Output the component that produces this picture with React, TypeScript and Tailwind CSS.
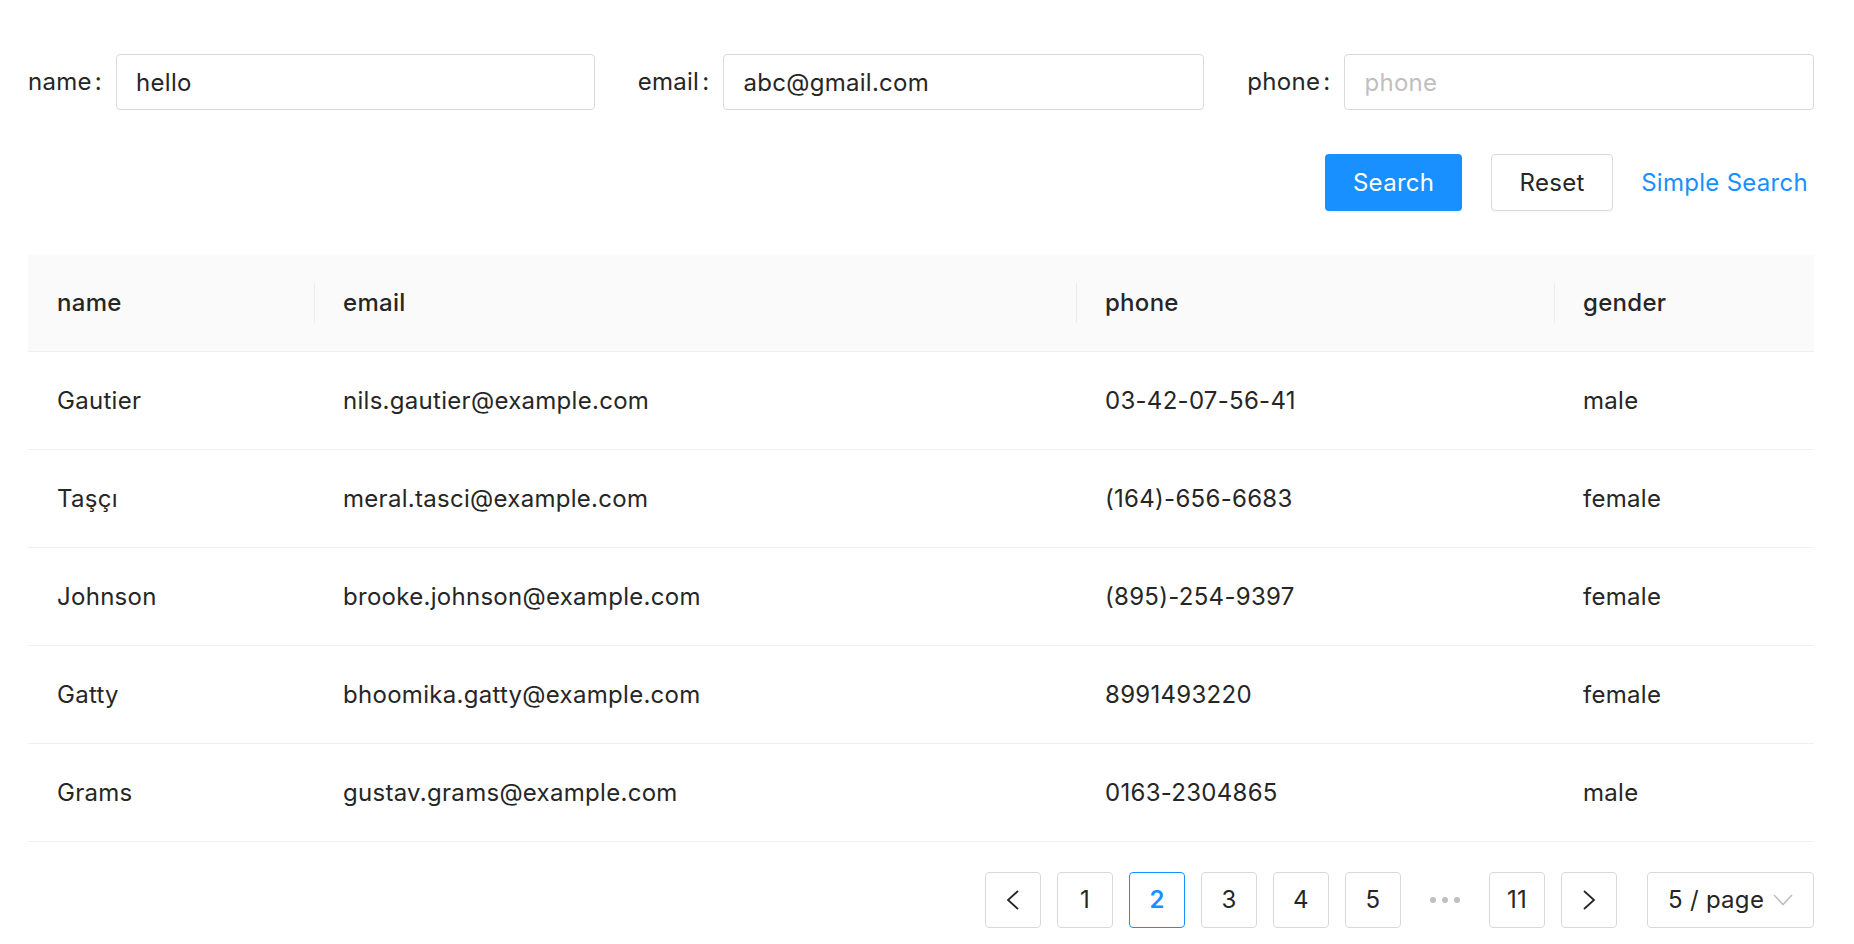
import React from "react";

const rows = [
  { name: "Gautier", email: "nils.gautier@example.com", phone: "03-42-07-56-41", gender: "male" },
  { name: "Taşçı", email: "meral.tasci@example.com", phone: "(164)-656-6683", gender: "female" },
  { name: "Johnson", email: "brooke.johnson@example.com", phone: "(895)-254-9397", gender: "female" },
  { name: "Gatty", email: "bhoomika.gatty@example.com", phone: "8991493220", gender: "female" },
  { name: "Grams", email: "gustav.grams@example.com", phone: "0163-2304865", gender: "male" },
];

function Field({ label, value, placeholder }: { label: string; value?: string; placeholder?: string }) {
  return (
    <div className="flex items-center">
      <label className="flex shrink-0 items-center whitespace-nowrap">
        <span>{label}</span>
        <span className="ml-[3px] mr-[14px]">:</span>
      </label>
      <input
        readOnly
        value={value ?? ""}
        placeholder={placeholder}
        className="h-[56px] min-w-0 flex-1 rounded-[4px] border border-[#d9d9d9] bg-white pl-[19px] pr-[19px] text-[24px] tracking-[0.012em] text-[#262626] outline-none placeholder:text-[#bfbfbf]"
      />
    </div>
  );
}

function PageBtn({ children, active }: { children: React.ReactNode; active?: boolean }) {
  return (
    <div
      className={
        active
          ? "flex h-[56px] w-[56px] items-center justify-center rounded-[4px] border border-[#1890ff] bg-white font-semibold text-[#1890ff]"
          : "flex h-[56px] w-[56px] items-center justify-center rounded-[4px] border border-[#d9d9d9] bg-white text-[#262626]"
      }
    >
      {children}
    </div>
  );
}

export default function App() {
  return (
    <div className="min-h-screen bg-white pl-[28px] pr-[40px] pt-[54px] font-['Inter','Noto_Sans',sans-serif] text-[24px] leading-[1.5] tracking-[0.012em] text-[#262626]">
      <div className="grid grid-cols-3 gap-x-[43px]">
        <Field label="name" value="hello" />
        <Field label="email" value="abc@gmail.com" />
        <Field label="phone" placeholder="phone" />
      </div>

      <div className="mt-[44px] flex items-center justify-end">
        <button className="h-[57px] w-[137px] rounded-[4px] bg-[#1890ff] tracking-[0.012em] text-white shadow-[0_2px_0_rgba(0,0,0,0.045)]">
          Search
        </button>
        <button className="ml-[29px] h-[57px] w-[122px] rounded-[4px] border border-[#d9d9d9] bg-white tracking-[0.012em] text-[#262626] shadow-[0_2px_0_rgba(0,0,0,0.015)]">
          Reset
        </button>
        <button className="ml-[28px] h-[57px] pr-[6px] tracking-[0.012em] text-[#1890ff]">Simple Search</button>
      </div>

      <div className="mt-[44px]">
        <div className="grid h-[97px] grid-cols-[286px_762px_478px_1fr] items-center border-b border-[#f0f0f0] bg-[#fafafa] font-medium">
          <div className="relative pl-[29px]">name</div>
          <div className="relative flex items-center pl-[29px]">
            <span className="absolute left-0 top-1/2 h-[40px] w-px -translate-y-1/2 bg-[#ececec]" />
            email
          </div>
          <div className="relative flex items-center pl-[29px]">
            <span className="absolute left-0 top-1/2 h-[40px] w-px -translate-y-1/2 bg-[#ececec]" />
            phone
          </div>
          <div className="relative flex items-center pl-[29px]">
            <span className="absolute left-0 top-1/2 h-[40px] w-px -translate-y-1/2 bg-[#ececec]" />
            gender
          </div>
        </div>
        {rows.map((r) => (
          <div
            key={r.email}
            className="grid h-[98px] grid-cols-[286px_762px_478px_1fr] items-center border-b border-[#f0f0f0]"
          >
            <div className="pl-[29px]">{r.name}</div>
            <div className="pl-[29px]">{r.email}</div>
            <div className="pl-[29px]">{r.phone}</div>
            <div className="pl-[29px]">{r.gender}</div>
          </div>
        ))}
      </div>

      <div className="mt-[30px] flex items-center justify-end">
        <div className="flex items-center gap-[16px]">
          <PageBtn>
            <svg width="14" height="22" viewBox="0 0 14 22" fill="none">
              <polyline points="12,2 2,11 12,20" stroke="#262626" strokeWidth="1.8" strokeLinejoin="miter" />
            </svg>
          </PageBtn>
          <PageBtn>1</PageBtn>
          <PageBtn active>2</PageBtn>
          <PageBtn>3</PageBtn>
          <PageBtn>4</PageBtn>
          <PageBtn>5</PageBtn>
          <div className="flex h-[56px] w-[56px] items-center justify-center gap-[6px]">
            <span className="h-[6px] w-[6px] rounded-full bg-[#bfbfbf]" />
            <span className="h-[6px] w-[6px] rounded-full bg-[#bfbfbf]" />
            <span className="h-[6px] w-[6px] rounded-full bg-[#bfbfbf]" />
          </div>
          <PageBtn>11</PageBtn>
          <PageBtn>
            <svg width="14" height="22" viewBox="0 0 14 22" fill="none">
              <polyline points="2,2 12,11 2,20" stroke="#262626" strokeWidth="1.8" strokeLinejoin="miter" />
            </svg>
          </PageBtn>
        </div>
        <div className="ml-[30px] flex h-[56px] w-[167px] items-center justify-between rounded-[4px] border border-[#d9d9d9] bg-white pl-[20px] pr-[20px]">
          <span className="whitespace-nowrap">5 / page</span>
          <svg width="20" height="12" viewBox="0 0 20 12" fill="none">
            <polyline points="1,1 10,10.5 19,1" stroke="#bfbfbf" strokeWidth="1.6" />
          </svg>
        </div>
      </div>
    </div>
  );
}
